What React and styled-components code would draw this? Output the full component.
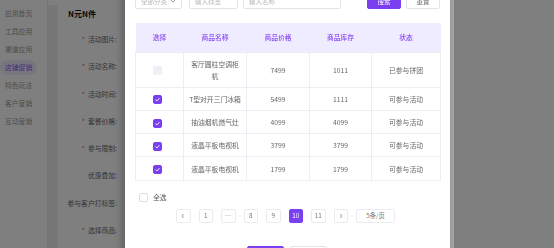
import React from 'react';
import styled, { createGlobalStyle } from 'styled-components';

const Global = createGlobalStyle`
  html, body { margin: 0; padding: 0; background: #fff; }
  body {
    font-family: "Noto Sans CJK SC", "Noto Sans", sans-serif;
    overflow: hidden;
    width: 554px;
    height: 248px;
  }
  * { box-sizing: border-box; }
`;

const Page = styled.div`
  display: flex;
  width: 554px;
  height: 248px;
  background: #fff;
`;

const Sidebar = styled.nav`
  width: 48px;
  flex-shrink: 0;
  padding-top: 6px;
  display: flex;
  flex-direction: column;
  gap: 3px;
  border-right: 1px solid #e6e6ee;
`;

const NavItem = styled.div`
  width: 37px;
  height: 15px;
  line-height: 15px;
  padding-left: 5px;
  font-size: 6.8px;
  border-radius: 8px;
  white-space: nowrap;
  color: ${(p) => (p.$active ? '#8a5cf6' : '#9a9a9a')};
  background: ${(p) => (p.$active ? '#f1ebff' : 'transparent')};
`;

const Strip = styled.div`
  width: 10px;
  flex-shrink: 0;
  margin-top: 5px;
  background: #eeeef4;
`;

const Main = styled.main`
  flex: 1;
  padding-top: 6px;
`;

const Title = styled.h1`
  margin: 0 0 0 10px;
  height: 16px;
  line-height: 16px;
  font-size: 8px;
  font-weight: 700;
  color: #111;
`;

const Form = styled.div`
  margin-top: 4px;
  width: 59px;
  display: flex;
  flex-direction: column;
`;

const Label = styled.div`
  height: 27.3px;
  line-height: 27.3px;
  text-align: right;
  font-size: 6.8px;
  color: #6a6a6a;
  white-space: nowrap;
`;

const Star = styled.span`
  color: #f0464a;
  margin-right: 3px;
`;

const Overlay = styled.div`
  position: fixed;
  inset: 0;
  background: rgba(0, 0, 0, 0.5);
`;

const Modal = styled.div`
  position: fixed;
  left: 125px;
  top: -15px;
  width: 325px;
  height: 290px;
  background: #fff;
  padding: 8px 10px 0 10px;
  box-shadow: -3px 0 8px rgba(0, 0, 0, 0.25), 4px 0 0 rgba(230, 232, 245, 0.35);
  display: flex;
  flex-direction: column;
`;

const FilterRow = styled.div`
  display: flex;
  align-items: center;
  height: 16px;
`;

const Field = styled.div`
  width: ${(p) => p.$w}px;
  height: 16px;
  margin-left: ${(p) => p.$ml || 0}px;
  border: 1px solid #e4e4e8;
  border-radius: 2px;
  font-size: 6.5px;
  color: #b8b8bc;
  padding: 0 5px;
  display: flex;
  align-items: center;
  justify-content: space-between;
`;

const Spacer = styled.div`
  flex: 1;
`;

const Btn = styled.button`
  width: 34px;
  height: ${(p) => p.$h || 16}px;
  margin-left: ${(p) => p.$ml || 0}px;
  border-radius: 2px;
  font-family: inherit;
  font-size: 6.5px;
  padding: 0;
  cursor: pointer;
  border: 1px solid ${(p) => (p.$primary ? '#7b3ff2' : '#e4e4e8')};
  background: ${(p) => (p.$primary ? '#7b3ff2' : '#fff')};
  color: ${(p) => (p.$primary ? '#fff' : '#666')};
`;

const Table = styled.table`
  margin-top: 14px;
  width: 305px;
  border-collapse: collapse;
  table-layout: fixed;
  font-size: 6.8px;
`;

const Th = styled.th`
  height: 29px;
  background: #f0ecff;
  color: #8a4cf6;
  font-weight: 500;
  text-align: center;
  padding: 0;
  border-bottom: 1px solid #ebebf2;
`;

const Td = styled.td`
  height: 23.3px;
  padding: 5px 4px;
  line-height: 12px;
  text-align: center;
  color: #666;
  border: 1px solid #ededf3;
  white-space: nowrap;
`;

const Wrap = styled.span`
  display: inline-block;
  width: 50px;
  white-space: normal;
`;

const Box = styled.span`
  display: inline-block;
  vertical-align: middle;
  width: 9px;
  height: 9px;
  border-radius: 2px;
  margin-right: ${(p) => p.$mr || 0}px;
  background: ${(p) =>
    p.$state === 'on' ? '#7b3ff2' : p.$state === 'disabled' ? '#eef0f8' : '#fff'};
  border: 1px solid
    ${(p) => (p.$state === 'on' ? '#7b3ff2' : p.$state === 'disabled' ? '#eef0f8' : '#dcdce2')};
  position: relative;
  svg { position: absolute; left: 0; top: 0; }
`;

const SelectAll = styled.label`
  margin-top: 12px;
  margin-left: 4px;
  display: flex;
  align-items: center;
  gap: 5px;
  height: 9px;
  font-size: 6.8px;
  color: #555;
`;

const Pager = styled.div`
  margin-top: 7px;
  display: flex;
  justify-content: center;
  gap: 8px;
  padding-right: 4px;
`;

const PageItem = styled.div`
  width: ${(p) => p.$w || 14.5}px;
  height: 14.5px;
  border: 1px solid ${(p) => (p.$active ? '#7b3ff2' : '#ebebf0')};
  border-radius: 2px;
  background: ${(p) => (p.$active ? '#7b3ff2' : '#fff')};
  color: ${(p) => (p.$active ? '#fff' : '#777')};
  font-size: 6.3px;
  display: flex;
  align-items: center;
  justify-content: center;
`;

const Footer = styled.div`
  margin-top: 23px;
  display: flex;
  justify-content: center;
  gap: 6px;
  padding-right: 2px;
`;

const Check = ({ state, mr }) => (
  <Box $state={state} $mr={mr}>
    {state === 'on' && (
      <svg width="7" height="7" viewBox="0 0 7 7">
        <path d="M1.6 3.7 L2.9 4.9 L5.4 2.2" fill="none" stroke="#fff" strokeWidth="1" />
      </svg>
    )}
  </Box>
);

const Chevron = ({ dir }) => (
  <svg width="6" height="6" viewBox="0 0 6 6">
    <path
      d={dir === 'left' ? 'M3.8 1 L2 3 L3.8 5' : dir === 'right' ? 'M2.2 1 L4 3 L2.2 5' : 'M1 2 L3 4 L5 2'}
      fill="none"
      stroke="#888"
      strokeWidth="0.8"
    />
  </svg>
);

const menu = ['应用首页', '工具应用', '渠道应用', '店铺促销', '特色玩法', '客户营销', '互动营销'];
const labels = [
  ['活动图片', true],
  ['活动名称', true],
  ['活动时间', true],
  ['套餐价格', true],
  ['参与限制', true],
  ['优惠叠加', false],
  ['参与客户打标签', false],
  ['选择商品', true],
];
const rows = [
  { name: '客厅圆柱空调柜机', price: '7499', stock: '1011', status: '已参与拼团', state: 'disabled', wrap: true },
  { name: 'T型对开三门冰箱', price: '5499', stock: '1111', status: '可参与活动', state: 'on' },
  { name: '抽油烟机燃气灶', price: '4099', stock: '4099', status: '可参与活动', state: 'on' },
  { name: '液晶平板电视机', price: '3799', stock: '3799', status: '可参与活动', state: 'on' },
  { name: '液晶平板电视机', price: '1799', stock: '1799', status: '可参与活动', state: 'on' },
];
const widths = [48, 63, 63, 62, 69];

export default function App() {
  return (
    <>
      <Global />
      <Page>
        <Sidebar>
          {menu.map((m) => (
            <NavItem key={m} $active={m === '店铺促销'}>{m}</NavItem>
          ))}
        </Sidebar>
        <Strip />
        <Main>
          <Title>N元N件</Title>
          <Form>
            {labels.map(([t, req]) => (
              <Label key={t}>
                {req && <Star>*</Star>}
                {t}:
              </Label>
            ))}
          </Form>
        </Main>
      </Page>
      <Overlay />
      <Modal>
        <FilterRow>
          <Field $w={47}>
            全部分类 <Chevron dir="down" />
          </Field>
          <Field $w={49} $ml={7}>输入标签</Field>
          <Field $w={98} $ml={5}>输入名称</Field>
          <Spacer />
          <Btn $primary>搜索</Btn>
          <Btn $ml={5}>重置</Btn>
        </FilterRow>
        <Table>
          <colgroup>
            {widths.map((w, i) => (
              <col key={i} style={{ width: w }} />
            ))}
          </colgroup>
          <thead>
            <tr>
              <Th>选择</Th>
              <Th>商品名称</Th>
              <Th>商品价格</Th>
              <Th>商品库存</Th>
              <Th>状态</Th>
            </tr>
          </thead>
          <tbody>
            {rows.map((r, i) => (
              <tr key={i}>
                <Td>
                  <Check state={r.state} mr={5} />
                </Td>
                <Td>{r.wrap ? <Wrap>{r.name}</Wrap> : r.name}</Td>
                <Td>{r.price}</Td>
                <Td>{r.stock}</Td>
                <Td>{r.status}</Td>
              </tr>
            ))}
          </tbody>
        </Table>
        <SelectAll>
          <Check state="off" />
          全选
        </SelectAll>
        <Pager>
          <PageItem><Chevron dir="left" /></PageItem>
          <PageItem>1</PageItem>
          <PageItem>…</PageItem>
          <PageItem>8</PageItem>
          <PageItem>9</PageItem>
          <PageItem $active>10</PageItem>
          <PageItem>11</PageItem>
          <PageItem><Chevron dir="right" /></PageItem>
          <PageItem $w={39}>5条/页</PageItem>
        </Pager>
        <Footer>
          <Btn $primary $h={18} style={{ width: 37 }}>确定</Btn>
          <Btn $h={18} style={{ width: 37 }}>取消</Btn>
        </Footer>
      </Modal>
    </>
  );
}
